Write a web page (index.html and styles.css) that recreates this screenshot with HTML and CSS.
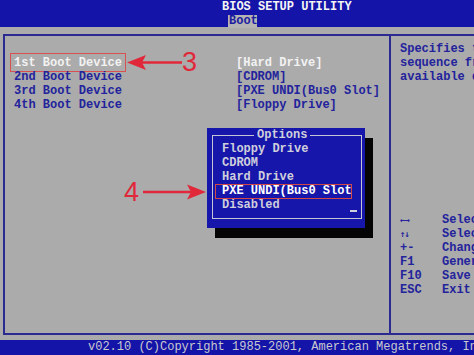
FILE: index.html
```html
<!DOCTYPE html>
<html>
<head>
<meta charset="utf-8">
<link rel="stylesheet" href="styles.css">
</head>
<body>
<div class="screen">
  <header class="top">
    <div class="title">BIOS SETUP UTILITY</div>
    <div class="tabs"><span class="tab">Boot</span></div>
  </header>
  <main class="frame">
    <section class="settings">
      <div class="row"><span class="label selected">1st Boot Device</span><span class="value current">[Hard Drive]</span></div>
      <div class="row"><span class="label">2nd Boot Device</span><span class="value">[CDROM]</span></div>
      <div class="row"><span class="label">3rd Boot Device</span><span class="value">[PXE UNDI(Bus0 Slot]</span></div>
      <div class="row"><span class="label">4th Boot Device</span><span class="value">[Floppy Drive]</span></div>
    </section>
    <aside class="help">
      <p class="desc">Specifies the boot<br>sequence from the<br>available devices.</p>
      <ul class="keys">
        <li><span class="key glyph">←→</span><span>Select Screen</span></li>
        <li><span class="key glyph">↑↓</span><span>Select Item</span></li>
        <li><span class="key">+-</span><span>Change Option</span></li>
        <li><span class="key">F1</span><span>General Help</span></li>
        <li><span class="key">F10</span><span>Save and Exit</span></li>
        <li><span class="key">ESC</span><span>Exit</span></li>
      </ul>
    </aside>
  </main>
  <footer class="bottom">v02.10 (C)Copyright 1985-2001, American Megatrends, Inc.</footer>

  <div class="popup">
    <div class="optbox">
      <span class="opttitle">Options</span>
      <div class="opt">Floppy Drive</div>
      <div class="opt">CDROM</div>
      <div class="opt">Hard Drive</div>
      <div class="opt chosen">PXE UNDI(Bus0 Slot</div>
      <div class="opt">Disabled</div>
      <span class="cursor"></span>
    </div>
  </div>

  <svg class="arrows" width="474" height="355" viewBox="0 0 474 355">
    <line x1="140" y1="62.5" x2="182" y2="62.5" stroke="#e0283a" stroke-width="2.5"/>
    <polygon points="127,62.5 146,55 142,62.5 146,70" fill="#e0283a"/>
    <line x1="143" y1="192" x2="193" y2="192" stroke="#e0283a" stroke-width="2.5"/>
    <polygon points="206,192 187,184.5 191,192 187,199.5" fill="#e0283a"/>
  </svg>
  <span class="num num3">3</span>
  <span class="num num4">4</span>
</div>
</body>
</html>
```
FILE: styles.css
```css
* { box-sizing: border-box; }
html, body { margin: 0; padding: 0; }
body { background: #ababab; }

.screen {
  position: relative;
  width: 474px;
  height: 355px;
  overflow: hidden;
  display: flex;
  flex-direction: column;
  background: #ababab;
  font-family: "Liberation Mono", "DejaVu Sans Mono", monospace;
  font-size: 12px;
  font-weight: bold;
  color: #23239c;
}

.top {
  height: 27px;
  background: #1414a8;
  flex: none;
}
.title {
  height: 14px;
  line-height: 14px;
  padding-left: 222px;
  color: #f4f4f4;
}
.tabs {
  height: 13px;
  padding-left: 228px;
}
.tab {
  display: inline-block;
  height: 13px;
  line-height: 13px;
  width: 29px;
  padding-left: 1px;
  background: #b4b4b4;
  color: #1c1ca0;
}

.frame {
  flex: 1;
  margin: 7px 0 5px 3px;
  width: 500px;
  border: 2px solid #2a2a90;
  display: grid;
  grid-template-columns: 384px 1fr;
}

.settings {
  padding: 20px 0 0 9px;
}
.row {
  display: flex;
  height: 14px;
  line-height: 14px;
}
.label {
  width: 222px;
  position: relative;
}
.label.selected { color: #f2f2f2; }
.label.selected::before {
  content: "";
  position: absolute;
  left: -4px;
  top: -3px;
  width: 114px;
  bottom: -2px;
  border: 1px solid #d85050;
}
.value { white-space: nowrap; }
.value.current { color: #f2f2f2; }

.help {
  border-left: 2px solid #2a2a90;
  padding: 6px 0 0 9px;
  white-space: nowrap;
}
.desc {
  margin: 0;
  line-height: 14px;
}
.keys {
  list-style: none;
  margin: 129px 0 0 0;
  padding: 0;
}
.keys li {
  display: flex;
  height: 14px;
  line-height: 14px;
}
.key { width: 42px; }
.key.glyph {
  font-family: "DejaVu Sans Mono", monospace;
  font-size: 9px;
  letter-spacing: -1px;
  font-variant-emoji: text;
  color: #23239c;
}

.bottom {
  flex: none;
  height: 15px;
  line-height: 15px;
  background: #1414a8;
  color: #c9c9cf;
  font-weight: normal;
  padding-left: 88px;
  white-space: nowrap;
}

.popup {
  position: absolute;
  left: 207px;
  top: 128px;
  width: 158px;
  height: 100px;
  background: #1616aa;
  box-shadow: 8px 10px 0 #050505;
  padding: 7px 3px 9px 5px;
}
.optbox {
  position: relative;
  height: 100%;
  border: 1px solid #c4c4d4;
  padding: 6px 0 0 9px;
  color: #cfcfdc;
}
.opttitle {
  position: absolute;
  top: -8px;
  left: 41px;
  padding: 0 3px;
  line-height: 14px;
  background: #1616aa;
  color: #cfcfdc;
}
.opt {
  position: relative;
  height: 14px;
  line-height: 14px;
  white-space: nowrap;
}
.opt.chosen { color: #ffffff; }
.opt.chosen::before {
  content: "";
  position: absolute;
  left: -7px;
  right: 9px;
  top: 0;
  bottom: -1px;
  border: 1px solid #d04848;
}
.cursor {
  position: absolute;
  right: 4px;
  bottom: 6px;
  width: 7px;
  height: 2px;
  background: #cfcfdc;
}

.arrows {
  position: absolute;
  left: 0;
  top: 0;
  pointer-events: none;
}
.num {
  position: absolute;
  font-family: "Liberation Sans", Arial, sans-serif;
  font-weight: normal;
  font-size: 27px;
  line-height: 27px;
  color: #e0283a;
}
.num3 { left: 182px; top: 49px; }
.num4 { left: 124px; top: 179px; }
```
